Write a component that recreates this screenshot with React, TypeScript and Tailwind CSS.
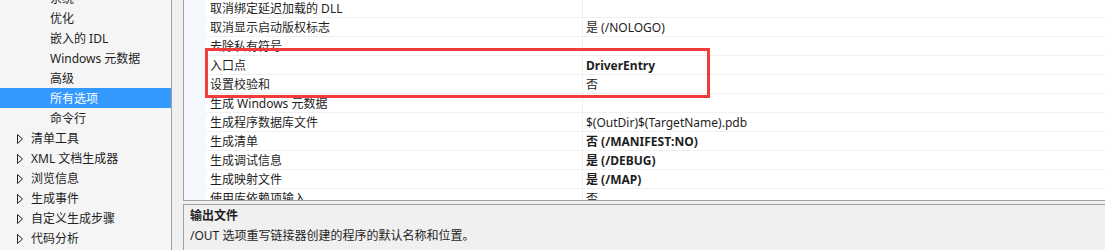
import React from "react";

const font = { fontFamily: '"Noto Sans", "Noto Sans CJK SC", sans-serif' };

type TreeItem = { label: string; level: 0 | 1; selected?: boolean };

const tree: TreeItem[] = [
  { label: "系统", level: 1 },
  { label: "优化", level: 1 },
  { label: "嵌入的 IDL", level: 1 },
  { label: "Windows 元数据", level: 1 },
  { label: "高级", level: 1 },
  { label: "所有选项", level: 1, selected: true },
  { label: "命令行", level: 1 },
  { label: "清单工具", level: 0 },
  { label: "XML 文档生成器", level: 0 },
  { label: "浏览信息", level: 0 },
  { label: "生成事件", level: 0 },
  { label: "自定义生成步骤", level: 0 },
  { label: "代码分析", level: 0 },
];

type Row = { name: string; value?: string; bold?: boolean };

const rows: Row[] = [
  { name: "取消绑定延迟加载的 DLL" },
  { name: "取消显示启动版权标志", value: "是 (/NOLOGO)" },
  { name: "去除私有符号" },
  { name: "入口点", value: "DriverEntry", bold: true },
  { name: "设置校验和", value: "否" },
  { name: "生成 Windows 元数据" },
  { name: "生成程序数据库文件", value: "$(OutDir)$(TargetName).pdb" },
  { name: "生成清单", value: "否 (/MANIFEST:NO)", bold: true },
  { name: "生成调试信息", value: "是 (/DEBUG)", bold: true },
  { name: "生成映射文件", value: "是 (/MAP)", bold: true },
  { name: "使用库依赖项输入", value: "否" },
];

function Triangle() {
  return (
    <svg width="6" height="10" viewBox="0 0 6 10" className="shrink-0">
      <polygon points="0.5,0.5 5.5,5 0.5,9.5" fill="none" stroke="#262626" strokeWidth="1" />
    </svg>
  );
}

export default function App() {
  return (
    <div className="relative flex h-[250px] w-[1105px] overflow-hidden bg-[#f0f0f0] text-[12px] text-[#1e1e1e]" style={font}>
      {/* left tree */}
      <div className="flex w-[172px] shrink-0 flex-col border-r border-[#a0a0a0] bg-[#f5f5f5]">
        <div className="mt-[-12px] flex flex-col">
          {tree.map((t) => (
            <div
              key={t.label}
              className={
                "flex h-[20px] items-center pt-[1px] " +
                (t.selected ? "bg-[#3399ff] text-white" : "")
              }
            >
              {t.level === 0 ? (
                <div className="flex items-center pl-[17px]">
                  <Triangle />
                  <span className="pl-[8px] leading-none">{t.label}</span>
                </div>
              ) : (
                <span className="pl-[50px] leading-none">{t.label}</span>
              )}
            </div>
          ))}
        </div>
      </div>

      {/* right side */}
      <div className="flex min-w-0 flex-1 flex-col pl-[11px]">
        <div className="flex h-[201px] shrink-0 overflow-hidden border-b border-l border-[#a0a0a0] bg-white">
          <div className="w-[22px] shrink-0 bg-[#f4f7fc]" />
          <div className="mt-[-1px] flex min-w-0 flex-1 flex-col">
            {rows.map((r) => (
              <div key={r.name} className="flex h-[19px] shrink-0 border-b border-[#f0f0f0]">
                <div className="flex w-[377px] shrink-0 items-center border-r border-[#f0f0f0] pl-[4px] pt-[1px] leading-none">
                  {r.name}
                </div>
                <div className={"flex flex-1 items-center pl-[3px] pt-[1px] leading-none " + (r.bold ? "font-bold" : "")}>
                  {r.value ?? ""}
                </div>
              </div>
            ))}
          </div>
        </div>
        <div className="mt-[3px] flex flex-1 flex-col border-l border-t border-[#a0a0a0] bg-[#f0f0f0] pl-[6px] pt-[1px]">
          <div className="h-[20px] font-bold leading-[20px]">输出文件</div>
          <div className="h-[20px] leading-[20px]">/OUT 选项重写链接器创建的程序的默认名称和位置。</div>
        </div>
      </div>

      {/* red highlight */}
      <div className="pointer-events-none absolute left-[205px] top-[48px] h-[50px] w-[505px] border-[3px] border-[#f23b3b]" />
    </div>
  );
}
